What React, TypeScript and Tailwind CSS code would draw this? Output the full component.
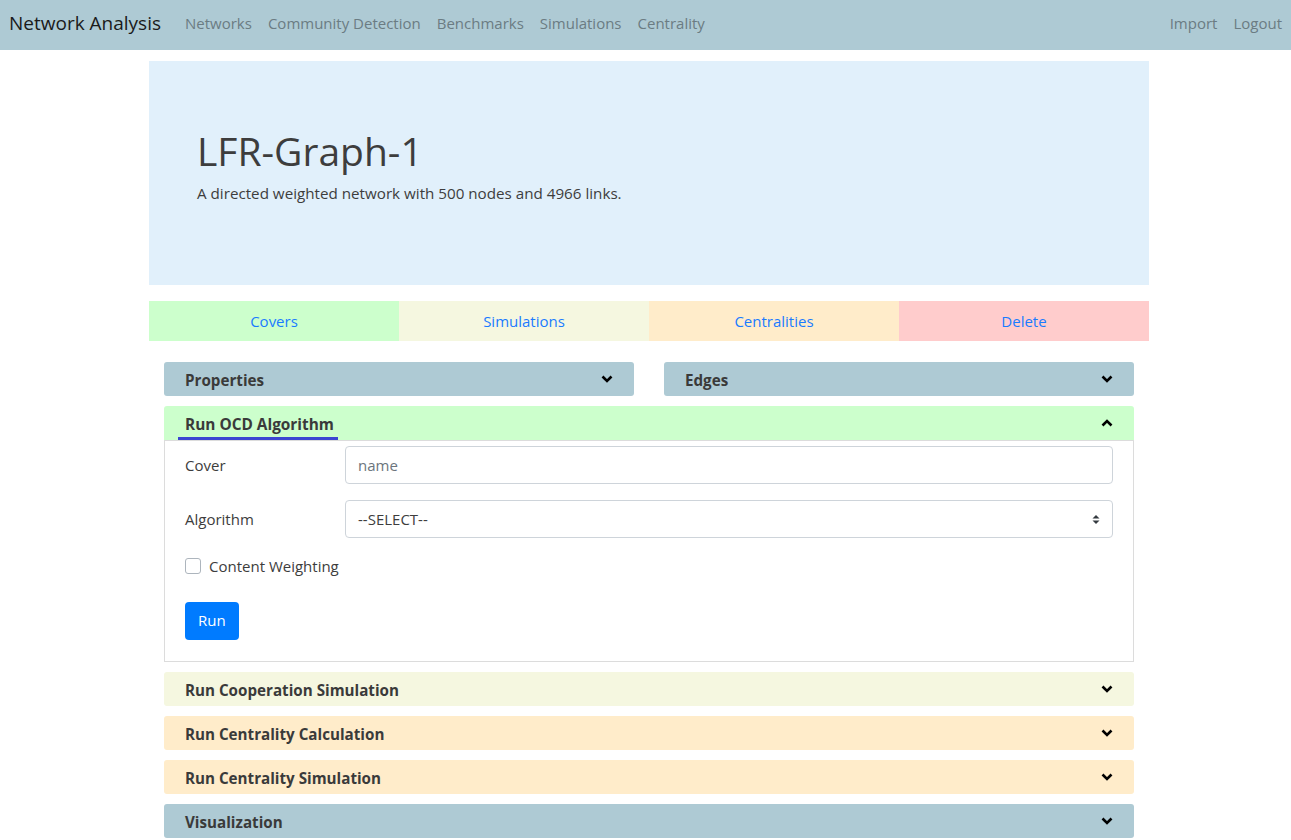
import React from "react"

const Chevron = ({ up = false }: { up?: boolean }) => (
  <svg width="12" height="8" viewBox="0 0 12 8" className="block">
    {up ? (
      <polyline points="1.5,6.5 6,2 10.5,6.5" fill="none" stroke="#000" strokeWidth="2.6" />
    ) : (
      <polyline points="1.5,1.5 6,6 10.5,1.5" fill="none" stroke="#000" strokeWidth="2.6" />
    )}
  </svg>
)

const Bar = ({ title, bg, className = "" }: { title: string; bg: string; className?: string }) => (
  <div className={`flex items-center justify-between h-[34px] pl-[21px] pr-[21px] rounded-[3px] ${bg} ${className}`}>
    <span className="pt-[3px] text-[15.2px] font-bold text-[#3a3a3a]">{title}</span>
    <Chevron />
  </div>
)

export default function App() {
  return (
    <div className="min-h-[840px] bg-white font-['Open_Sans',sans-serif] text-[#333]">
      <nav className="flex items-center justify-between h-[50px] bg-[#aecad4] pl-[9px] pr-[9px] pb-[4px]">
        <div className="flex items-center">
          <span className="text-[19px] text-[#1a1a1a] mr-[24px]">Network Analysis</span>
          <div className="flex items-center gap-[16px] text-[15px] text-[#6b7c83]">
            <span>Networks</span>
            <span>Community Detection</span>
            <span>Benchmarks</span>
            <span>Simulations</span>
            <span>Centrality</span>
          </div>
        </div>
        <div className="flex items-center gap-[16px] text-[15px] text-[#6b7c83]">
          <span>Import</span>
          <span>Logout</span>
        </div>
      </nav>

      <div className="w-[1000px] ml-[149px]">
        <div className="mt-[11px] h-[224px] bg-[#e1f0fb] px-[48px] pt-[66px]">
          <h1 className="text-[39px] leading-[48px] text-[#3d3d3d] font-normal">LFR-Graph-1</h1>
          <p className="mt-[7px] text-[15.2px] text-[#3d3d3d]">A directed weighted network with 500 nodes and 4966 links.</p>
        </div>

        <div className="mt-[16px] grid grid-cols-4 h-[40px] text-[15px] text-[#1a7bff]">
          <div className="flex items-center justify-center bg-[#ccffcc]">Covers</div>
          <div className="flex items-center justify-center bg-[#f5f7e0]">Simulations</div>
          <div className="flex items-center justify-center bg-[#ffecca]">Centralities</div>
          <div className="flex items-center justify-center bg-[#ffcccc]">Delete</div>
        </div>

        <div className="px-[15px] mt-[21px]">
          <div className="grid grid-cols-2 gap-[30px]">
            <Bar title="Properties" bg="bg-[#aecad4]" />
            <Bar title="Edges" bg="bg-[#aecad4]" />
          </div>

          <div className="mt-[10px]">
            <div className="flex items-center justify-between h-[34px] pl-[21px] pr-[21px] rounded-t-[3px] bg-[#ccffcc]">
              <span className="relative pt-[3px] text-[15.4px] font-bold text-[#3a3a3a]">
                Run OCD Algorithm
                <span className="absolute left-[-7px] right-[-4px] bottom-[-4px] h-[3px] bg-[#3b45d1]" />
              </span>
              <Chevron up />
            </div>
            <div className="border border-[#dcdcdc] px-[20px] pt-[5px] pb-[21px]">
              <div className="flex items-center">
                <label className="w-[160px] text-[15px] text-[#3d3d3d]">Cover</label>
                <div className="flex-1 h-[38px] border border-[#ced4da] rounded-[4px] flex items-center px-[12px] text-[15px] text-[#6c757d]">
                  name
                </div>
              </div>
              <div className="flex items-center mt-[16px]">
                <label className="w-[160px] text-[15px] text-[#3d3d3d]">Algorithm</label>
                <div className="flex-1 h-[38px] border border-[#ced4da] rounded-[4px] flex items-center justify-between pl-[12px] pr-[12px] text-[15px] text-[#3d3d3d]">
                  <span>--SELECT--</span>
                  <svg width="8" height="11" viewBox="0 0 8 11">
                    <path d="M0.5 4.5 L4 1 L7.5 4.5 Z" fill="#343a40" />
                    <path d="M0.5 6.5 L4 10 L7.5 6.5 Z" fill="#343a40" />
                  </svg>
                </div>
              </div>
              <div className="flex items-center mt-[17px]">
                <span className="w-[16px] h-[16px] border border-[#adb5bd] rounded-[3px] bg-white" />
                <span className="ml-[8px] text-[15px] text-[#3d3d3d]">Content Weighting</span>
              </div>
              <button className="mt-[24px] h-[38px] px-[13px] rounded-[4px] bg-[#007bff] text-white text-[15px] block">
                Run
              </button>
            </div>
          </div>

          <Bar title="Run Cooperation Simulation" bg="bg-[#f5f7e0]" className="mt-[10px]" />
          <Bar title="Run Centrality Calculation" bg="bg-[#ffecca]" className="mt-[10px]" />
          <Bar title="Run Centrality Simulation" bg="bg-[#ffecca]" className="mt-[10px]" />
          <Bar title="Visualization" bg="bg-[#aecad4]" className="mt-[10px]" />
        </div>
      </div>
    </div>
  )
}
